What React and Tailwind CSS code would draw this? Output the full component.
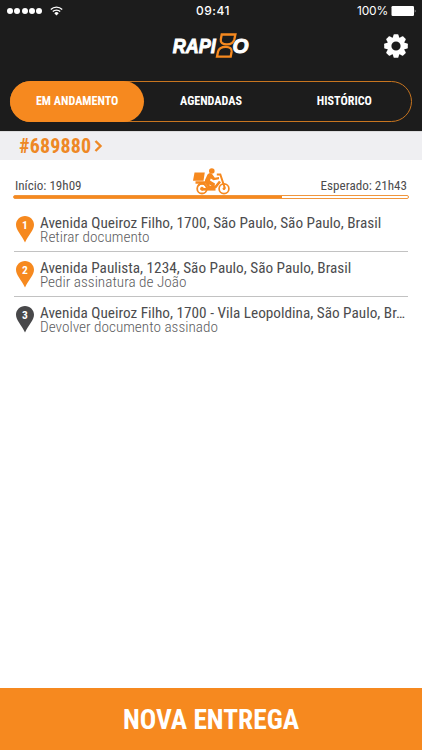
import React from "react";

const FONT =
  "font-['Roboto_Condensed','Roboto','Liberation_Sans',sans-serif] font-stretch-condensed";

const STOPS = [
  {
    id: 1,
    address: "Avenida Queiroz Filho, 1700, São Paulo, São Paulo, Brasil",
    task: "Retirar documento",
    done: true,
  },
  {
    id: 2,
    address: "Avenida Paulista, 1234, São Paulo, São Paulo, Brasil",
    task: "Pedir assinatura de João",
    done: true,
  },
  {
    id: 3,
    address: "Avenida Queiroz Filho, 1700 - Vila Leopoldina, São Paulo, Br…",
    task: "Devolver documento assinado",
    done: false,
  },
];

const StatusBar = () => (
  <div className="grid h-[21px] grid-cols-3 items-center pl-[7px] pr-[5px] font-['Inter',sans-serif] text-white">
    <div className="flex items-center gap-[8px]">
      <div className="flex gap-[1.3px]">
        {[0, 1, 2, 3, 4].map((dot) => (
          <span key={dot} className="h-[6px] w-[6px] rounded-full bg-white" />
        ))}
      </div>
      <svg width="13" height="10" viewBox="0 0 13 10" fill="none">
        <path d="M0.800 3.400a8.200 8.200 0 0 1 11.400 0" stroke="white" strokeWidth="1.400" />
        <path d="M2.800 5.600a5.300 5.300 0 0 1 7.400 0" stroke="white" strokeWidth="1.400" />
        <path d="M4.300 7.300a3 3 0 0 1 4.400 0L6.500 9.600z" fill="white" />
      </svg>
    </div>
    <div className="pl-[2px] text-center text-[12px] font-medium tracking-[0.5px]">09:41</div>
    <div className="flex items-center justify-end gap-[3px]">
      <span className="text-[12px] tracking-[-0.2px]">100%</span>
      <svg width="26" height="10" viewBox="0 0 26 10" fill="white">
        <rect x="0.500" width="22.500" height="10" rx="1.200" />
        <path d="M23.800 3.200q1.400 1.800 0 3.600z" />
      </svg>
    </div>
  </div>
);

const Logo = () => (
  <svg width="78" height="31" viewBox="0 0 78 31">
    <g
      fill="white"
      fontFamily="'Liberation Sans', sans-serif"
      fontWeight="700"
      fontStyle="italic"
      fontSize="21"
      stroke="white"
      strokeWidth="1"
    >
      <text x="0.800" y="21" textLength="43" lengthAdjust="spacingAndGlyphs">
        RAPI
      </text>
      <text x="60.500" y="21" textLength="16" lengthAdjust="spacingAndGlyphs">
        O
      </text>
    </g>
    {/* hourglass made of two facing D shapes */}
    <g fill="none" stroke="#f6891f" strokeWidth="2.300">
      <path d="M49.700 2.500H63.400L62.300 7.500C61.300 11.300 58.500 12.400 55 12.400C50.500 12.400 48.300 10.500 48.800 7.500Z" />
      <path d="M45 24.700H58.700L59.600 19.700C60.100 16.500 57.800 14.800 53.800 14.800C49.800 14.800 46.800 16.300 46 19.700Z" />
    </g>
  </svg>
);

const Gear = () => (
  <svg width="24" height="24" viewBox="-12 -12 24 24">
    <g fill="white">
      {[0, 45, 90, 135, 180, 225, 270, 315].map((angle) => (
        <path
          key={angle}
          d="M-3.500-7.500L-2.400-11.300Q-2.200-11.800-1.700-11.800H1.700Q2.200-11.800 2.400-11.300L3.500-7.500Z"
          transform={`rotate(${angle})`}
        />
      ))}
    </g>
    <circle r="6.800" fill="none" stroke="white" strokeWidth="4.400" />
  </svg>
);

const Courier = () => (
  <svg width="37" height="27" viewBox="0 0 37 27" fill="none" stroke="#f6891f">
    <path d="M1.500 4.500h10.300l-1.300 8.200H0z" fill="#f6891f" stroke="none" />
    <circle cx="18.800" cy="3" r="2.800" fill="#f6891f" stroke="none" />
    <path
      d="M12 12L14.500 6.500Q17 3.500 19.500 6.500L21.800 9.800L26 9V11.200L20.500 12.200L17.800 10.500L17 12.500L22 15.500L21 22H17.500L18.300 17.500L12 15z"
      fill="#f6891f"
      stroke="none"
    />
    <path d="M2.500 14.500H13.500L16 19H22.500L27 13.500" strokeWidth="2.600" />
    <path d="M5 18Q7 14.500 11 15.500L14.500 20" strokeWidth="1.800" />
    <path d="M23.800 6.500H27.300L32 20.500" strokeWidth="2" />
    <path d="M9 21.300H22.500" strokeWidth="2.600" />
    <circle cx="9" cy="20.700" r="4.800" strokeWidth="1.800" />
    <circle cx="9" cy="20.700" r="1.500" fill="#f6891f" />
    <circle cx="31" cy="20.700" r="4.900" strokeWidth="1.700" />
    <circle cx="31" cy="20.700" r="1" fill="#f6891f" />
  </svg>
);

const Pin = ({ number, done }) => (
  <svg
    width="18"
    height="27"
    viewBox="0 0 18 27"
    className={`shrink-0 ${done ? "text-[#f6891f]" : "text-[#48484a]"}`}
  >
    <path
      d="M9 0C4 0 0 4 0 8.700C0 14.500 5.500 18.500 9 26.500C12.500 18.500 18 14.500 18 8.700C18 4 14 0 9 0z"
      fill="currentColor"
    />
    <text
      x="9"
      y="13"
      textAnchor="middle"
      fill="white"
      fontSize="11.5"
      fontWeight="700"
    >
      {number}
    </text>
  </svg>
);

const Tabs = () => (
  <nav className="mx-[10px] mt-[18px] grid h-[41px] grid-cols-3 items-center rounded-full border border-[#c8751f] text-center text-[12.1px] font-bold text-white">
    <button className="-my-px -ml-px h-[41px] rounded-full bg-[#f6891f]">
      EM ANDAMENTO
    </button>
    <button>AGENDADAS</button>
    <button>HISTÓRICO</button>
  </nav>
);

const Stop = ({ stop }) => (
  <li className="flex h-[45px] border-b border-[#c2c2c2] pl-[2px] pt-[9px] last:border-0">
    <Pin number={stop.id} done={stop.done} />
    <div className="ml-[6px] min-w-0 whitespace-nowrap">
      <div className="-mt-px text-[15.25px] leading-[16px] text-[#4c4c4e]">
        {stop.address}
      </div>
      <div className="text-[15.25px] font-light leading-[13px] text-[#5c5c5e]">
        {stop.task}
      </div>
    </div>
  </li>
);

export default function App() {
  return (
    <div className={`${FONT} flex h-[750px] w-[422px] flex-col overflow-hidden bg-white`}>
      <header className="h-[131px] bg-[#1c1c1c]">
        <StatusBar />
        <div className="mt-[11px] grid h-[31px] grid-cols-[1fr_auto_1fr] items-center pl-[14px] pr-[14px]">
          <span />
          <Logo />
          <button className="-mt-[4px] justify-self-end">
            <Gear />
          </button>
        </div>
        <Tabs />
      </header>

      <div className="flex h-[29px] items-center gap-[3px] border-t border-[#dcdcde] bg-[#efeff2] pb-px pl-[19px] text-[#ee8825]">
        <span className="text-[20px] font-bold leading-none tracking-[0.15px]">#689880</span>
        <svg width="9" height="12" viewBox="0 0 9 12" fill="none" className="mt-px">
          <path d="M1.500 1L6.500 6L1.500 11" stroke="currentColor" strokeWidth="2.400" />
        </svg>
      </div>

      <main className="flex-1">
        <div className="flex h-[35px] items-end justify-between pl-[15px] pr-[15px] text-[13.1px] text-[#4c4c4e]">
          <span className="w-[87px] leading-[19px]">Início: 19h09</span>
          <Courier />
          <span className="w-[87px] whitespace-nowrap text-right leading-[19px]">
            Esperado: 21h43
          </span>
        </div>
        <div className="ml-[13px] mr-[13px] h-[4px] rounded-full border border-[#f0953c]">
          <div className="h-full w-[68%] bg-[#f6891f]" />
        </div>
        <ul className="ml-[14px] mr-[14px] mt-[8px]">
          {STOPS.map((stop) => (
            <Stop key={stop.id} stop={stop} />
          ))}
        </ul>
      </main>

      <button className="h-[62px] bg-[#f6891f] pt-[3px] text-[27.4px] font-bold text-white">
        NOVA ENTREGA
      </button>
    </div>
  );
}
